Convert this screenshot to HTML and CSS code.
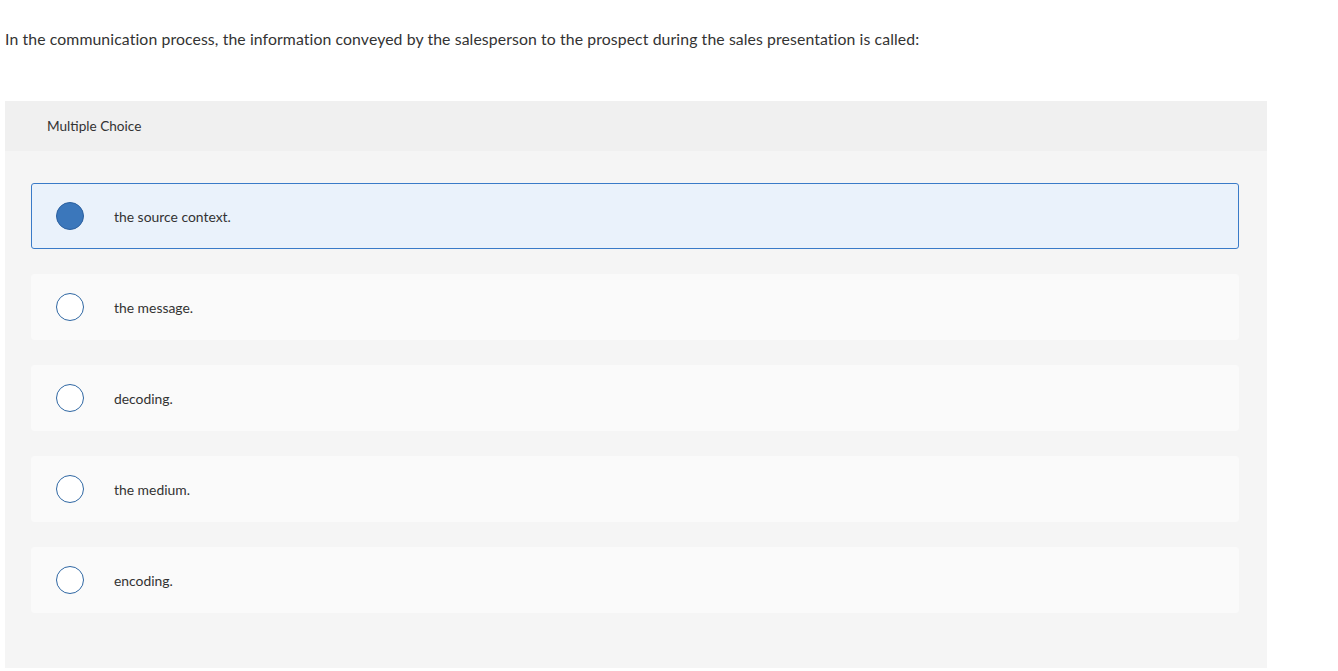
FILE: index.html
```html
<!DOCTYPE html>
<html>
<head>
<meta charset="utf-8">
<link rel="stylesheet" href="styles.css">
</head>
<body>
<p class="question">In the communication process, the information conveyed by the salesperson to the prospect during the sales presentation is called:</p>
<div class="panel">
  <div class="panel-head">Multiple Choice</div>
  <div class="panel-body">
    <div class="option selected"><span class="radio"></span><span class="label">the source context.</span></div>
    <div class="option"><span class="radio"></span><span class="label">the message.</span></div>
    <div class="option"><span class="radio"></span><span class="label">decoding.</span></div>
    <div class="option"><span class="radio"></span><span class="label">the medium.</span></div>
    <div class="option"><span class="radio"></span><span class="label">encoding.</span></div>
  </div>
</div>
</body>
</html>
```
FILE: styles.css
```css
html, body { margin: 0; padding: 0; background: #fff; }
body {
  font-family: "Lato", "Liberation Sans", sans-serif;
  color: #333;
  padding: 0 5px;
  width: 1262px;
}
.question {
  margin: 0;
  padding-top: 29px;
  height: 101px;
  box-sizing: border-box;
  font-size: 15.8px;
  line-height: 20px;
  letter-spacing: 0.1px;
}
.panel { background: #f5f5f5; }
.panel-head {
  background: #f0f0f0;
  height: 50px;
  padding-left: 42px;
  display: flex;
  align-items: center;
  font-size: 13.6px;
}
.panel-body {
  padding: 32px 28px 55px 26px;
  display: flex;
  flex-direction: column;
  gap: 25px;
}
.option {
  height: 66px;
  box-sizing: border-box;
  background: #fafafa;
  border: 1px solid #fafafa;
  border-radius: 3px;
  display: flex;
  align-items: center;
  padding-left: 24px;
  font-size: 13.9px;
}
.option.selected {
  background: #eaf2fb;
  border-color: #3a7bc8;
}
.radio {
  width: 28px;
  height: 28px;
  box-sizing: border-box;
  border-radius: 50%;
  border: 1.5px solid #2f67a3;
  background: #fff;
  flex: none;
}
.selected .radio {
  background: #3b77bb;
  border-color: #2b609f;
}
.label { margin-left: 30px; }
```
